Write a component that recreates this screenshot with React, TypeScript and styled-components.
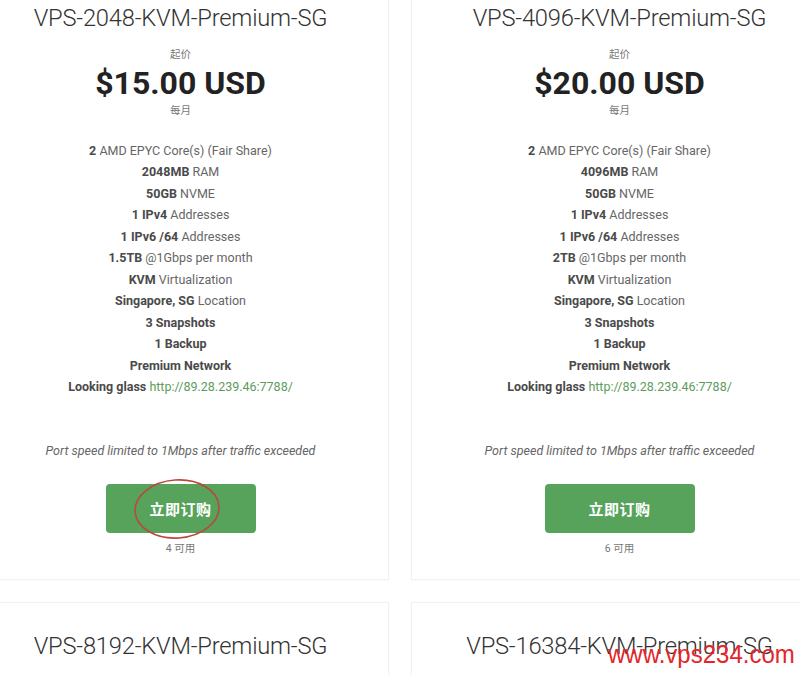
import React from "react";
import styled, { createGlobalStyle } from "styled-components";

type Feature = { strong: string; rest?: string; link?: string };

type Plan = {
  name: string;
  price?: string;
  available?: number;
  features?: Feature[];
  marked?: boolean;
};

const GlobalStyle = createGlobalStyle`
  html, body {
    margin: 0;
    padding: 0;
    background: #ffffff;
    overflow: hidden;
  }
  body {
    font-family: Roboto, "Noto Sans CJK SC", "Noto Sans", sans-serif;
    color: #555;
  }
`;

const Page = styled.div`
  position: relative;
  width: 800px;
  height: 675px;
  overflow: hidden;
`;

const Grid = styled.div`
  display: grid;
  grid-template-columns: repeat(2, 417px);
  column-gap: 22px;
  row-gap: 22px;
  margin-left: -28px;
  margin-top: -26px;
`;

const Card = styled.div<{ $open?: boolean }>`
  background: #fff;
  border: 1px solid #f1f1f1;
  box-shadow: 0 0 2px rgba(0, 0, 0, 0.03);
  padding: 29px 20px 22px;
  display: flex;
  flex-direction: column;
  align-items: center;
  min-height: ${(p) => (p.$open ? "300px" : "auto")};
`;

const Title = styled.h3`
  margin: 0;
  font-weight: 300;
  font-size: 23.7px;
  line-height: 29px;
  color: #333;
  letter-spacing: -0.2px;
`;

const Caption = styled.div<{ $top?: number }>`
  font-size: 10.5px;
  line-height: 16px;
  color: #777;
  margin-top: ${(p) => p.$top ?? 0}px;
`;

const Price = styled.div`
  font-weight: 700;
  font-size: 32px;
  line-height: 40px;
  color: #222;
`;

const Features = styled.ul`
  list-style: none;
  margin: 21px 0 0;
  padding: 0;
  text-align: center;
`;

const FeatureRow = styled.li`
  font-size: 12.5px;
  line-height: 21.45px;
  color: #666;
  white-space: nowrap;
`;

const Strong = styled.b`
  font-weight: 700;
  color: #4a4a4a;
`;

const Link = styled.a`
  color: #5c9c5c;
  text-decoration: none;
`;

const Note = styled.p`
  margin: 44px 0 0;
  font-size: 12.5px;
  line-height: 20px;
  font-style: italic;
  color: #666;
`;

const OrderWrap = styled.div`
  position: relative;
  margin-top: 23px;
`;

const OrderButton = styled.button`
  width: 150px;
  height: 49px;
  border: none;
  border-radius: 4px;
  background: #57a35c;
  color: #fff;
  font-family: "Noto Sans CJK SC", sans-serif;
  font-weight: 700;
  font-size: 15px;
  letter-spacing: 0.5px;
  cursor: pointer;
`;

const Circle = styled.svg`
  position: absolute;
  left: 26px;
  top: -7px;
  width: 90px;
  height: 64px;
  overflow: visible;
  pointer-events: none;
`;

const Watermark = styled.div`
  position: absolute;
  left: 608px;
  top: 638px;
  font-family: "Liberation Sans", Arial, sans-serif;
  font-size: 24px;
  line-height: 30px;
  color: #e3262b;
  transform: scaleY(1.1);
  transform-origin: left top;
`;

const featuresFor = (ram: string, traffic: string): Feature[] => [
  { strong: "2", rest: " AMD EPYC Core(s) (Fair Share)" },
  { strong: ram, rest: " RAM" },
  { strong: "50GB", rest: " NVME" },
  { strong: "1 IPv4", rest: " Addresses" },
  { strong: "1 IPv6 /64", rest: " Addresses" },
  { strong: traffic, rest: " @1Gbps per month" },
  { strong: "KVM", rest: " Virtualization" },
  { strong: "Singapore, SG", rest: " Location" },
  { strong: "3 Snapshots" },
  { strong: "1 Backup" },
  { strong: "Premium Network" },
  { strong: "Looking glass", link: "http://89.28.239.46:7788/" },
];

const plans: Plan[] = [
  {
    name: "VPS-2048-KVM-Premium-SG",
    price: "$15.00 USD",
    available: 4,
    marked: true,
    features: featuresFor("2048MB", "1.5TB"),
  },
  {
    name: "VPS-4096-KVM-Premium-SG",
    price: "$20.00 USD",
    available: 6,
    features: featuresFor("4096MB", "2TB"),
  },
  { name: "VPS-8192-KVM-Premium-SG" },
  { name: "VPS-16384-KVM-Premium-SG" },
];

const PlanCard: React.FC<{ plan: Plan }> = ({ plan }) => (
  <Card $open={!plan.price}>
    <Title>{plan.name}</Title>
    {plan.price && (
      <>
        <Caption $top={14}>起价</Caption>
        <Price>{plan.price}</Price>
        <Caption>每月</Caption>
        <Features>
          {plan.features?.map((f) => (
            <FeatureRow key={f.strong}>
              <Strong>{f.strong}</Strong>
              {f.rest}
              {f.link && (
                <>
                  {" "}
                  <Link href={f.link}>{f.link}</Link>
                </>
              )}
            </FeatureRow>
          ))}
        </Features>
        <Note>Port speed limited to 1Mbps after traffic exceeded</Note>
        <OrderWrap>
          <OrderButton>立即订购</OrderButton>
          {plan.marked && (
            <Circle viewBox="0 0 90 64">
              <ellipse
                cx="45"
                cy="32"
                rx="42"
                ry="29"
                fill="none"
                stroke="#b8493c"
                strokeWidth="1.6"
                transform="rotate(-4 45 32)"
              />
            </Circle>
          )}
        </OrderWrap>
        <Caption $top={8}>{plan.available} 可用</Caption>
      </>
    )}
  </Card>
);

export default function App() {
  return (
    <Page>
      <GlobalStyle />
      <Grid>
        {plans.map((p) => (
          <PlanCard key={p.name} plan={p} />
        ))}
      </Grid>
      <Watermark>www.vps234.com</Watermark>
    </Page>
  );
}
